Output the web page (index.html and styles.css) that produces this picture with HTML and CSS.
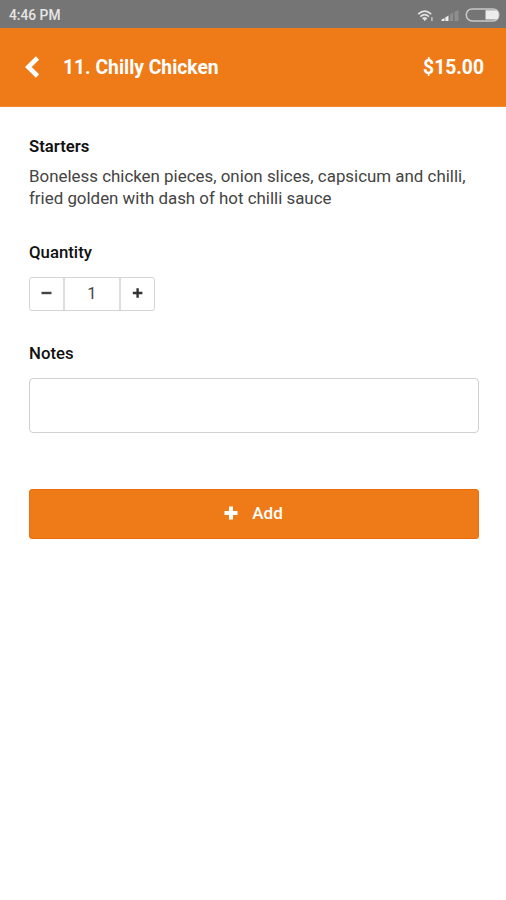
FILE: index.html
```html
<!DOCTYPE html>
<html lang="en">
<head>
<meta charset="utf-8">
<title>Chilly Chicken</title>
<link rel="stylesheet" href="styles.css">
</head>
<body>
<div class="status">
  <span class="time">4:46 PM</span>
  <svg class="status-icons" width="84" height="16" viewBox="0 0 84 16">
    <g fill="none" stroke="#e4e4e4" stroke-width="1.6">
      <path d="M2.2 7.100Q8.700 1.100 15.200 7.100"/>
      <path d="M4.400 9.700Q8.700 5.700 13 9.700"/>
      <path d="M6.600 11.900Q8.700 10 10.800 11.900"/>
    </g>
    <path d="M7.300 12L8.700 14.200L10.200 12Z" fill="#e4e4e4"/>
    <path d="M15.900 10V14" stroke="#c4c4c4" stroke-width="1.500"/>
    <path d="M25.500 14V12.500L28.500 11V14ZM29.300 14V10.500L32.500 8.500V14Z" fill="#efefef"/>
    <path d="M34 14V7.500L37 5.800V14ZM38.500 14V5L42.500 2.800V14Z" fill="#8e8e8e"/>
    <rect x="50.300" y="1.900" width="32.500" height="12" rx="5.800" fill="none" stroke="#c9c9c9" stroke-width="1.500"/>
    <path d="M69.500 3.300H78.500Q82.500 3.300 82.500 7.900Q82.500 12.500 78.500 12.500H69.500Z" fill="#ececec"/>
  </svg>
</div>
<header class="header">
  <svg class="back" width="16" height="22" viewBox="0 0 16 22"><path d="M13.500 2L4.300 11L13.500 20" fill="none" stroke="#fff" stroke-width="4.600"/></svg>
  <h1 class="title">11. Chilly Chicken</h1>
  <span class="price">$15.00</span>
</header>
<main class="content">
  <h2 class="category">Starters</h2>
  <p class="desc">Boneless chicken pieces, onion slices, capsicum and chilli,<br>fried golden with dash of hot chilli sauce</p>
  <h3 class="label quantity-label">Quantity</h3>
  <div class="stepper">
    <button class="step" aria-label="Decrease"><svg width="12" height="12" viewBox="0 0 12 12"><path d="M0.500 6H10.500" stroke="#444" stroke-width="2.400"/></svg></button>
    <span class="count">1</span>
    <button class="step" aria-label="Increase"><svg width="12" height="12" viewBox="0 0 12 12"><path d="M0.800 6H10.400M5.600 1.200V10.800" stroke="#333" stroke-width="2.400"/></svg></button>
  </div>
  <h3 class="label notes-label">Notes</h3>
  <input class="notes" type="text" aria-label="Notes">
  <button class="add"><svg width="14" height="14" viewBox="0 0 14 14"><path d="M0.500 7H13.500M7 0.500V13.500" stroke="#fff" stroke-width="4"/></svg><span class="add-text">Add</span></button>
</main>
</body>
</html>
```
FILE: styles.css
```css
* { box-sizing: border-box; }
body { margin: 0; background: #fff; color: #111; font-family: Roboto, "Liberation Sans", sans-serif; }
h1, h2, h3, p { margin: 0; }
button, input { font: inherit; margin: 0; padding: 0; }
.status { height: 28px; padding: 0 6px 0 9px; background: #757575; display: flex; align-items: center; justify-content: space-between; }
.time { color: #e6e6e6; font-size: 13.800px; font-weight: 500; line-height: 28px; padding-top: 2px; }
.status-icons { margin-top: 2px; }
.header { height: 79px; padding: 0 22px 0 24px; background: #ee7b17; color: #fff; display: flex; align-items: center; border-bottom: 1px solid #f08734; }
.back { margin-right: 23px; }
.title { flex: 1; font-size: 19.300px; font-weight: 700; line-height: 24px; padding-top: 1px; }
.price { font-size: 19.300px; font-weight: 700; line-height: 24px; padding-top: 1px; }
.content { display: flex; flex-direction: column; padding: 30px 27px 0 29px; }
.category { font-size: 16.700px; line-height: 20px; font-weight: 600; }
.desc { margin-top: 8px; font-size: 16.900px; line-height: 22px; color: #444; white-space: nowrap; }
.label { font-size: 16.800px; line-height: 20px; font-weight: 500; }
.quantity-label { margin-top: 33px; }
.stepper { margin-top: 15px; width: 126px; height: 34px; display: flex; border: 1px solid #d4d4d4; border-radius: 3px; }
.step { width: 33px; border: 0; background: none; display: flex; align-items: center; justify-content: center; padding-bottom: 2px; }
.count { flex: 1; border: solid #dedede; border-width: 0 2px; text-align: center; font-size: 16.500px; line-height: 31px; color: #444; }
.notes-label { margin-top: 32px; }
.notes { margin-top: 15px; width: 450px; height: 55px; border: 1px solid #d0d0d0; border-radius: 4px; background: #fff; }
.add { margin-top: 56px; width: 450px; height: 50px; padding: 0 1px 2px 0; border: 1px solid #ea6c0a; border-radius: 3px; background: #ee7b17; color: #fff; font-size: 17px; font-weight: 500; display: flex; align-items: center; justify-content: center; gap: 14px; }
```
